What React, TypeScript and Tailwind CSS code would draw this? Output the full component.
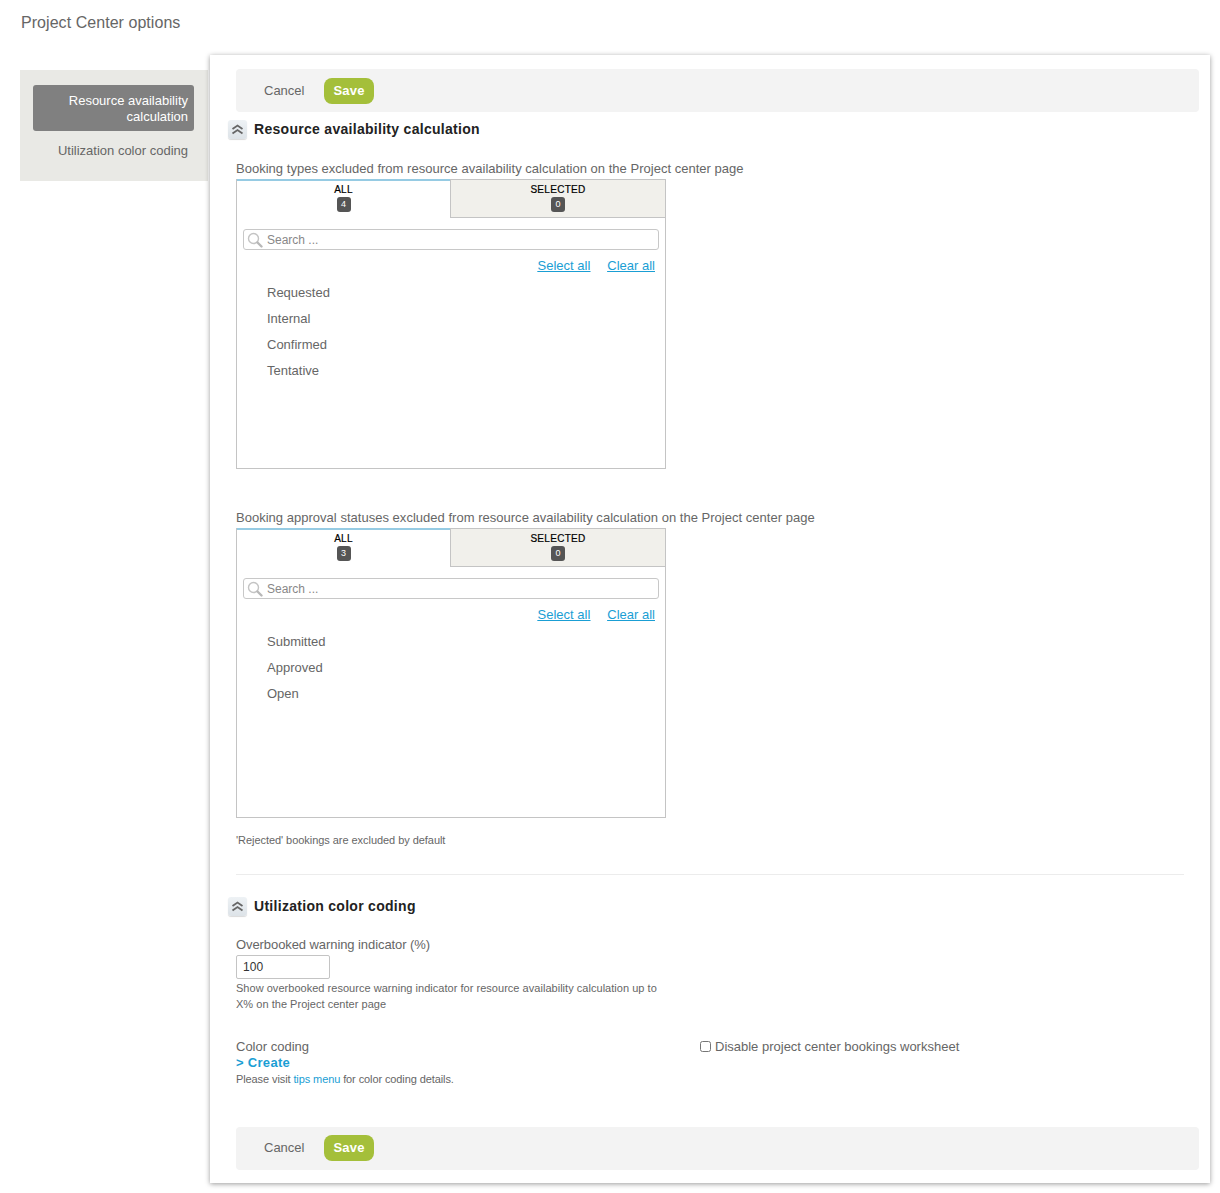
const fontStack = "[font-family:'Liberation_Sans',Arial,sans-serif]";

function ActionBar({ className }: { className: string }) {
  return (
    <div className={`ml-[26px] mr-[11px] h-[43px] flex items-center bg-[#f3f3f3] rounded-[4px] pl-[28px] ${className}`}>
      <span className="text-[13px] text-[#666] w-[60px]">Cancel</span>
      <button className="w-[50px] h-[26px] rounded-[8px] bg-[#a4bf3a] text-white text-[13px] font-bold tracking-[0.2px]">Save</button>
    </div>
  );
}

function SectionHeader({ title, className }: { title: string; className: string }) {
  return (
    <div className={`ml-[18px] flex items-center ${className}`}>
      <div className="w-[19px] h-[19px] rounded-[3px] bg-gradient-to-b from-[#eef2f5] to-[#dde3e8] shadow-[0_1px_1px_rgba(0,0,0,0.15)] flex items-center justify-center">
        <svg width="13" height="11" viewBox="0 0 13 11" fill="none" stroke="#666" strokeWidth="1.8">
          <path d="M1.5 5 L6.5 1.5 L11.5 5" />
          <path d="M1.5 9.5 L6.5 6 L11.5 9.5" />
        </svg>
      </div>
      <h2 className="ml-[7px] text-[14px] font-bold text-[#222] tracking-[0.29px]">{title}</h2>
    </div>
  );
}

function Tab({ label, count, active }: { label: string; count: number; active?: boolean }) {
  return (
    <div
      className={`h-[38px] flex flex-col items-center ${
        active ? "w-[213px] pt-[3px] bg-white border-t-2 border-[#96cbe3] -mt-px" : "flex-1 pt-[4px] bg-[#f1f0eb] border-b border-l border-[#c4c4c4]"
      }`}
    >
      <span className="text-[10px] leading-[12px] text-black [-webkit-text-stroke:0.2px_black] tracking-[0.3px]">{label}</span>
      <span className="mt-px w-[14px] h-[15px] rounded-[3px] bg-[#555] text-white text-[9px] leading-[15px] text-center">{count}</span>
    </div>
  );
}

function Picker({ label, items, className }: { label: string; items: string[]; className: string }) {
  return (
    <div className={`ml-[26px] ${className}`}>
      <div className="pt-px text-[13px] leading-[16px] text-[#666] tracking-[0.02px]">{label}</div>
      <div className="w-[430px] h-[290px] border border-[#c4c4c4] mt-[2px]">
        <div className="flex">
          <Tab label="ALL" count={items.length} active />
          <Tab label="SELECTED" count={0} />
        </div>
        <div className="relative mx-[6px] mt-[11px] h-[21px] border border-[#c8c8c8] rounded-[3px] pl-[23px] flex items-center text-[12px] text-[#888]">
          <svg className="absolute left-[3px] top-[2px]" width="16" height="16" viewBox="0 0 16 16" fill="none">
            <circle cx="6.5" cy="6.5" r="5" stroke="#c4c4c4" strokeWidth="1.4" />
            <path d="M10.5 10.5 L14.5 14.5" stroke="#b8b8b8" strokeWidth="2.4" strokeLinecap="round" />
          </svg>
          Search ...
        </div>
        <div className="flex justify-end gap-[17px] mr-[10px] mt-[8px] text-[13px] leading-[16px] text-[#1a9ed4] underline">
          <a>Select all</a>
          <a>Clear all</a>
        </div>
        <ul className="mt-[6px] ml-[30px]">
          {items.map((item) => (
            <li key={item} className="h-[26px] leading-[26px] text-[13px] text-[#666]">{item}</li>
          ))}
        </ul>
      </div>
    </div>
  );
}

export default function App() {
  return (
    <div className={`${fontStack} w-[1220px] h-[1193px] bg-white overflow-hidden`}>
      <h1 className="pl-[21px] pt-[13px] text-[16px] leading-[19px] text-[#666] tracking-[0.05px]">Project Center options</h1>
      <div className="flex mt-[23px] pl-[20px]">
        {/* 左侧菜单 */}
        <aside className="w-[188px] h-[111px] mt-[15px] bg-[#e9e9e5] pt-[15px] pl-[13px] pr-[14px] text-right text-[13px] leading-[16px]">
          <div className="h-[46px] rounded-[3px] bg-[#808080] text-white pt-[8px] pr-[6px]">Resource availability calculation</div>
          <div className="mt-[12px] pr-[6px] text-[#666]">Utilization color coding</div>
        </aside>

        <main className="ml-[2px] w-[1000px] h-[1128px] bg-white shadow-[0_1px_5px_rgba(0,0,0,0.4)]">
          <ActionBar className="mt-[14px]" />
          <SectionHeader title="Resource availability calculation" className="mt-[7px]" />
          <Picker
            className="mt-[20px]"
            label="Booking types excluded from resource availability calculation on the Project center page"
            items={["Requested", "Internal", "Confirmed", "Tentative"]}
          />
          <Picker
            className="mt-[40px]"
            label="Booking approval statuses excluded from resource availability calculation on the Project center page"
            items={["Submitted", "Approved", "Open"]}
          />
          <p className="ml-[26px] mt-[15px] text-[11px] leading-[14px] text-[#666] tracking-[-0.05px]">'Rejected' bookings are excluded by default</p>
          <div className="ml-[26px] mr-[26px] mt-[27px] border-t border-[#ececec]" />
          <SectionHeader title="Utilization color coding" className="mt-[21px]" />

          <div className="ml-[26px] mt-[20px]">
            <label className="block text-[13px] leading-[16px] text-[#666] tracking-[-0.08px]">Overbooked warning indicator (%)</label>
            <input
              readOnly
              value="100"
              className="block mt-[2px] w-[94px] h-[24px] border border-[#c4c4c4] rounded-[2px] px-[6px] pb-px text-[12px] tracking-[0.1px] text-[#333]"
            />
            <p className="mt-[1px] w-[430px] text-[11px] leading-[16px] text-[#666] tracking-[0.03px]">
              Show overbooked resource warning indicator for resource availability calculation up to X% on the Project center page
            </p>
          </div>

          <div className="flex ml-[26px] mt-[27px] h-[88px]">
            <div className="w-[464px]">
              <div className="text-[13px] leading-[16px] text-[#666]">Color coding</div>
              <a className="block text-[13px] leading-[16px] font-bold text-[#1a9ed4] tracking-[0.3px]">&gt; Create</a>
              <p className="text-[11px] leading-[16px] text-[#666] tracking-[-0.1px]">
                Please visit <a className="text-[#1a9ed4]">tips menu</a> for color coding details.
              </p>
            </div>
            <label className="flex items-start h-[16px] text-[13px] leading-[16px] text-[#666]">
              <input type="checkbox" className="w-[11px] h-[11px] mt-[2px] mr-[4px]" />
              Disable project center bookings worksheet
            </label>
          </div>

          <ActionBar className="pb-px" />
        </main>
      </div>
    </div>
  );
}
